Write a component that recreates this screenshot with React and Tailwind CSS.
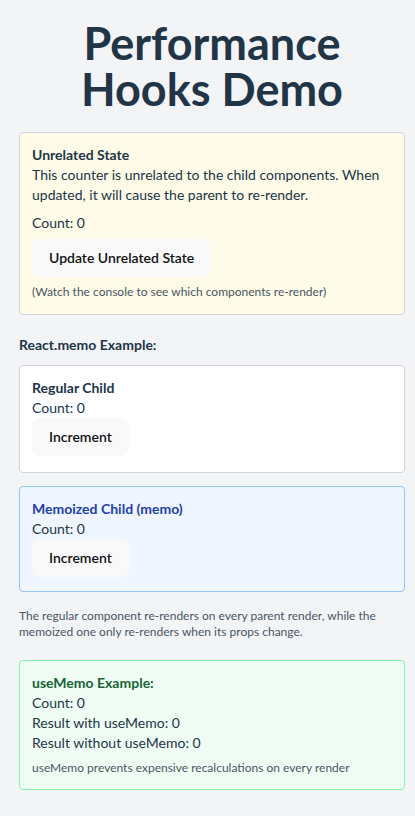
export default function App() {
  return (
    <div
      className="min-h-screen bg-[#f3f4f6] text-[#213547] pl-[19px] pr-[10px] pt-5 pb-6"
      style={{ fontFamily: 'Lato, "Open Sans", sans-serif' }}
    >
      <h1 className="text-center text-[45px] leading-[46px] font-bold text-[#213547] mb-5">
        Performance Hooks Demo
      </h1>

      <div className="bg-[#fefce8] border border-[#d1d5db] rounded px-3 pt-3 pb-3.5">
        <h3 className="text-sm leading-5 font-bold">Unrelated State</h3>
        <p className="text-sm leading-5 mb-2">
          This counter is unrelated to the child components. When updated, it will cause the parent to re-render.
        </p>
        <p className="text-sm leading-5">Count: 0</p>
        <button className="mt-1.5 bg-[#f9f9f9] border border-transparent rounded-lg px-4 py-2 text-sm leading-5 font-semibold text-[#111]">
          Update Unrelated State
        </button>
        <p className="mt-[6px] text-xs leading-[17px] text-[#4b5563]">
          (Watch the console to see which components re-render)
        </p>
      </div>

      <h2 className="mt-5 mb-2.5 text-sm leading-5 font-bold">React.memo Example:</h2>

      <div className="bg-white border border-[#d1d5db] rounded px-3 pt-3 pb-4">
        <h3 className="text-sm leading-5 font-bold">Regular Child</h3>
        <p className="text-sm leading-5">Count: 0</p>
        <button className="bg-[#f9f9f9] border border-transparent rounded-lg px-4 py-2 text-sm leading-5 font-semibold text-[#111]">
          Increment
        </button>
      </div>

      <div className="mt-[13px] bg-[#eff6ff] border border-[#93c5fd] rounded px-3 pt-3 pb-3.5">
        <h3 className="text-sm leading-5 font-bold text-[#1e40af]">Memoized Child (memo)</h3>
        <p className="text-sm leading-5">Count: 0</p>
        <button className="bg-[#f9f9f9] border border-transparent rounded-lg px-4 py-2 text-sm leading-5 font-semibold text-[#111]">
          Increment
        </button>
      </div>

      <p className="mt-4 text-xs leading-4 text-[#4b5563]">
        The regular component re-renders on every parent render, while the memoized one only re-renders when its props change.
      </p>

      <div className="mt-5 bg-[#f0fdf4] border border-[#86efac] rounded px-3 pt-3 pb-3">
        <h3 className="text-sm leading-5 font-bold text-[#166534]">useMemo Example:</h3>
        <p className="text-sm leading-5">Count: 0</p>
        <p className="text-sm leading-5">Result with useMemo: 0</p>
        <p className="text-sm leading-5">Result without useMemo: 0</p>
        <p className="mt-1.5 text-xs leading-[18px] text-[#4b5563]">
          useMemo prevents expensive recalculations on every render
        </p>
      </div>
    </div>
  );
}
